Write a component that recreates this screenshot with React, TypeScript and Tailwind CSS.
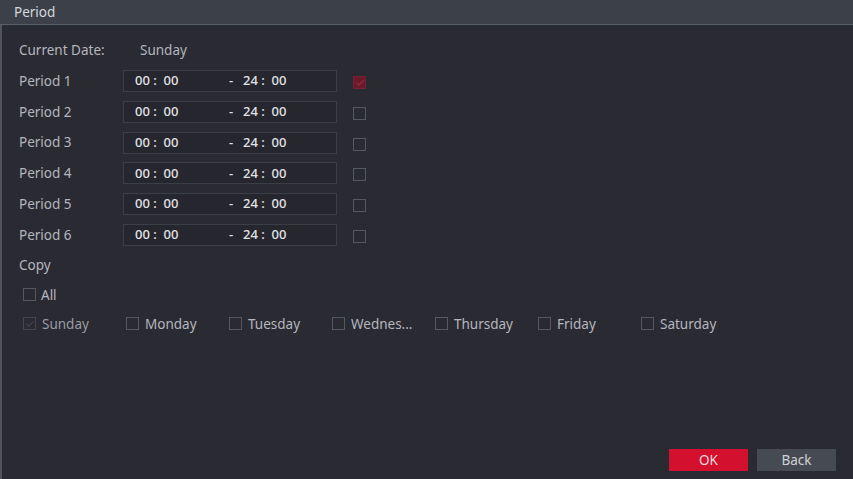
import { Check } from 'lucide-react';

const periods = [1, 2, 3, 4, 5, 6];
const days = ['Sunday', 'Monday', 'Tuesday', 'Wednes...', 'Thursday', 'Friday', 'Saturday'];

const Box = ({ checked, red, dim }: { checked?: boolean; red?: boolean; dim?: boolean }) => (
  <span
    className={
      'flex h-[13px] w-[13px] shrink-0 items-center justify-center border ' +
      (red ? 'border-[#7a1f33] bg-[#6b1a2c]' : dim ? 'border-[#44464e]' : 'border-[#55585f]')
    }
  >
    {checked && (
      <Check size={10} strokeWidth={2} className={red ? 'text-[#c2334f]' : 'text-[#55585f]'} />
    )}
  </span>
);

const App = () => {
  return (
    <div
      className="flex h-[479px] w-[853px] flex-col overflow-hidden bg-[#2a2a33] text-[13.5px] text-[#b4b6bd]"
      style={{ fontFamily: '"Noto Sans", "Open Sans", sans-serif' }}
    >
      <div className="flex h-[25px] shrink-0 items-center border-b border-[#5a606a] bg-[#3b4049] pl-[14px] text-[#d6d8dc]">
        Period
      </div>
      <div className="flex flex-1 flex-col border-l-2 border-[#50545c] pl-[17px] pt-[15px]">
        <div className="flex h-[21px] items-center">
          <span className="w-[121px]">Current Date:</span>
          <span>Sunday</span>
        </div>
        <div className="mt-[9px] flex flex-col gap-[8.8px]">
          {periods.map(p => (
            <div key={p} className="flex h-[22px] items-center">
              <span className="w-[104px]">Period {p}</span>
              <div className="flex h-[22px] w-[214px] items-center border border-[#3c3e47] bg-[#26262e] pl-[11px] text-[13px] font-medium text-[#e2e3e6]">
                <span className="w-[94px]">00&nbsp;:&nbsp;&nbsp;00</span>
                <span className="w-[14px]">-</span>
                <span>24&nbsp;:&nbsp;&nbsp;00</span>
              </div>
              <span className="ml-[16px] mt-[3px]">
                <Box checked={p === 1} red={p === 1} />
              </span>
            </div>
          ))}
        </div>
        <div className="mt-[9px] flex h-[20px] items-center">Copy</div>
        <div className="mt-[10px] flex h-[20px] items-center gap-[5px] pl-[4px]">
          <Box />
          <span>All</span>
        </div>
        <div className="mt-[9px] flex h-[20px] items-center pl-[4px]">
          {days.map((d, i) => (
            <div key={d} className="flex w-[103px] items-center gap-[6px]">
              <Box checked={i === 0} dim={i === 0} />
              <span className={i === 0 ? 'text-[#9a9ca3]' : ''}>{d}</span>
            </div>
          ))}
        </div>
        <div className="mt-auto mb-[8px] flex justify-end gap-[9px] pr-[17px]">
          <button className="h-[22px] w-[79px] bg-[#d3112e] text-[#f1d6da]">OK</button>
          <button className="h-[22px] w-[79px] bg-[#464b53] text-[#d0d2d6]">Back</button>
        </div>
      </div>
    </div>
  );
};

export default App;
